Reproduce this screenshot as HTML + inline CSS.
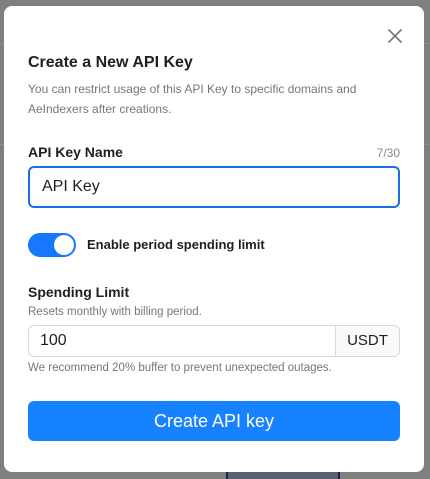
<!DOCTYPE html>
<html><head><style>
body{margin:0;width:430px;height:479px;background:#7f7f7f;font-family:"Liberation Sans",Arial,sans-serif;position:relative;overflow:hidden}
.bgl{position:absolute;left:0;width:430px;height:1px;background:#8c8c8c}
.modal{position:absolute;left:4px;top:6px;width:420px;height:466px;background:#fff;border-radius:8px}
.a{position:absolute}
</style></head><body>
<div class="bgl" style="top:43px"></div>
<div class="bgl" style="top:144px"></div>
<div class="a" style="left:226px;top:472px;width:110px;height:7px;background:#5a6070;border-left:2px solid #1c2438;border-right:2px solid #1c2438"></div>
<div class="modal">
<svg class="a" style="left:383px;top:22px" width="16" height="16" viewBox="0 0 16 16"><path d="M1.5 1.5L14.5 14.5M14.5 1.5L1.5 14.5" stroke="#777" stroke-width="1.6" fill="none"/></svg>
<div class="a" style="left:24px;top:48px;font-size:16px;font-weight:bold;color:#1f1f1f">Create a New API Key</div>
<div class="a" style="left:24px;top:73px;font-size:12px;line-height:20px;color:#777;width:340px">You can restrict usage of this API Key to specific domains and AeIndexers after creations.</div>
<div class="a" style="left:24px;top:138px;font-size:14px;font-weight:bold;color:#1f1f1f">API Key Name</div>
<div class="a" style="right:24px;top:140px;font-size:12px;color:#888">7/30</div>
<div class="a" style="left:24px;top:160px;width:368px;height:38px;border:2px solid #1c6ee8;border-radius:6px;font-size:16px;line-height:38px;color:#1f1f1f;text-indent:12px">API Key</div>
<div class="a" style="left:24px;top:227px;width:48px;height:24px;border-radius:12px;background:#1677ff"><div class="a" style="right:2px;top:2px;width:20px;height:20px;border-radius:50%;background:#fff"></div></div>
<div class="a" style="left:83px;top:231px;font-size:13px;font-weight:bold;color:#1f1f1f">Enable period spending limit</div>
<div class="a" style="left:24px;top:278px;font-size:14px;font-weight:bold;color:#1f1f1f">Spending Limit</div>
<div class="a" style="left:24px;top:300px;font-size:11.5px;color:#777">Resets monthly with billing period.</div>
<div class="a" style="left:24px;top:319px;width:370px;height:30px;border:1px solid #d9d9d9;border-radius:6px;overflow:hidden">
<div class="a" style="left:11px;top:0;font-size:16px;line-height:30px;color:#1f1f1f">100</div>
<div class="a" style="right:0;top:0;width:63px;height:30px;background:#fafafa;border-left:1px solid #d9d9d9;font-size:15px;line-height:30px;text-align:center;color:#1f1f1f">USDT</div>
</div>
<div class="a" style="left:24px;top:356px;font-size:11.5px;color:#777">We recommend 20% buffer to prevent unexpected outages.</div>
<div class="a" style="left:24px;top:395px;width:372px;height:40px;border-radius:6px;background:#1782ff;color:#fff;font-size:18px;line-height:40px;text-align:center">Create API key</div>
</div>
</body></html>
